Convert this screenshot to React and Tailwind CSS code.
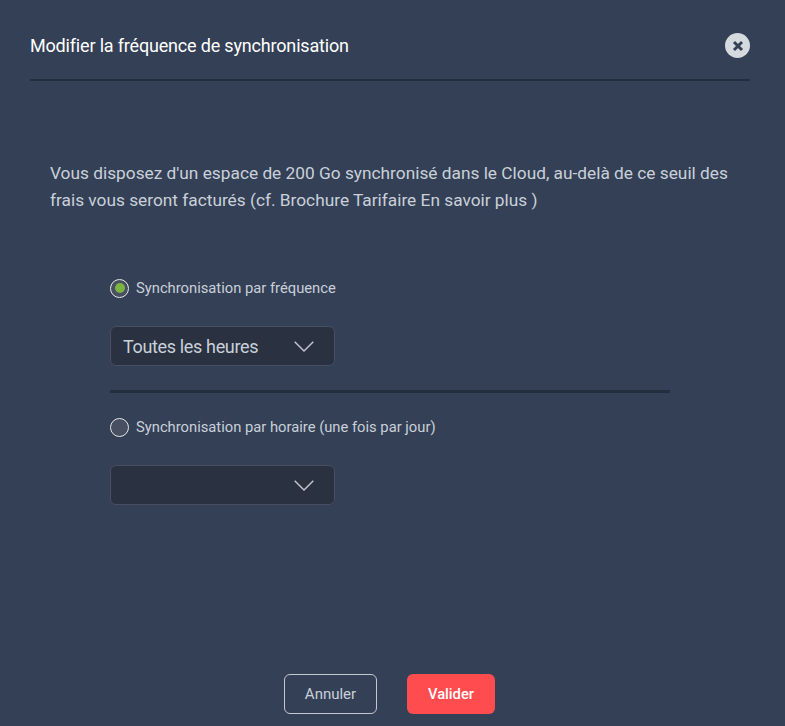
import React from "react";

function Chevron() {
  return (
    <svg width="20" height="11" viewBox="0 0 20 11" fill="none" className="block">
      <path d="M0.7 0.7 L10 10 L19.3 0.7" stroke="#c3c8cf" strokeWidth="1.4" />
    </svg>
  );
}

function Radio({ checked, label }) {
  return (
    <label className="flex items-center h-[20px] gap-[7px]">
      <span className="flex items-center justify-center w-[19px] h-[19px] rounded-full border-[1.5px] border-[#e4e7ea] bg-[#474f60]">
        {checked && <span className="block w-[10px] h-[10px] rounded-full bg-[#7cb342]" />}
      </span>
      <span className="text-[14.75px] leading-[20px] text-[#c9d0d9]">{label}</span>
    </label>
  );
}

function Select({ value }) {
  return (
    <div className="flex items-center justify-between w-[225px] h-[40px] pl-[12px] pr-[20px] rounded-[6px] border border-[#474f60] bg-[#2a3140]">
      <span className="pt-[2px] text-[18px] leading-[26px] tracking-[-0.35px] text-[#c9d0d9]">{value}</span>
      <Chevron />
    </div>
  );
}

export default function App() {
  return (
    <div className="w-[785px] h-[726px] bg-[#344056] flex flex-col font-['Roboto',sans-serif] overflow-hidden">
      <header className="ml-[30px] mr-[35px] h-[81px] pt-[33px] border-b-2 border-[#232e3e] flex items-start justify-between">
        <h1 className="text-[18px] leading-[26px] tracking-[-0.18px] text-white">Modifier la fréquence de synchronisation</h1>
        <button className="flex items-center justify-center w-[25px] h-[25px] rounded-full bg-[#d5dade]">
          <svg width="12" height="12" viewBox="0 0 12 12">
            <path d="M2 2 L10 10 M10 2 L2 10" stroke="#344056" strokeWidth="3" />
          </svg>
        </button>
      </header>

      <p className="mt-[79px] ml-[50px] mr-[50px] text-[17.3px] leading-[27px] text-[#c9d0d9]">
        Vous disposez d'un espace de 200 Go synchronisé dans le Cloud, au-delà de ce seuil des frais vous seront facturés (cf. Brochure Tarifaire En savoir plus )
      </p>

      <div className="mt-[64px] ml-[110px] w-[560px] flex flex-col">
        <Radio checked label="Synchronisation par fréquence" />
        <div className="mt-[28px]"><Select value="Toutes les heures" /></div>
        <div className="mt-[24px] h-[3px] bg-[#232e3e]" />
        <div className="mt-[24px]"><Radio label="Synchronisation par horaire (une fois par jour)" /></div>
        <div className="mt-[28px]"><Select value="" /></div>
      </div>

      <div className="mt-auto mb-[12px] flex justify-center gap-[30px] pr-[6px]">
        <button className="w-[93px] h-[40px] rounded-[6px] border border-[#c3c9d0] text-[15px] text-[#c9d0d9]">Annuler</button>
        <button className="w-[88px] h-[40px] rounded-[6px] bg-[#ff4d4f] text-[14.75px] font-medium text-white">Valider</button>
      </div>
    </div>
  );
}
